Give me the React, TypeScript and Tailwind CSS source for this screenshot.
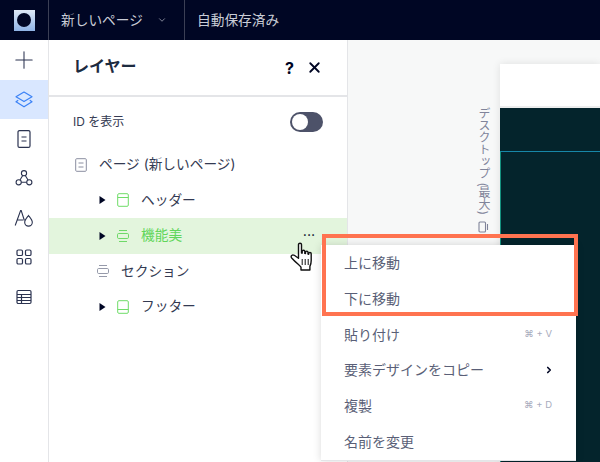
import { ChevronDown, Plus, X, ChevronRight } from "lucide-react"

const FONT = "font-['Inter','Noto_Sans_CJK_JP',sans-serif]"

function LayersIcon() {
  return (
    <svg width="18" height="17" viewBox="0 0 18 17" fill="none" stroke="#3b82f6" strokeWidth="1.200" strokeLinejoin="round">
      <path d="M9 1L17 5.800L9 10.600L1 5.800z" />
      <path d="M3.200 9.200L1 10.800L9 15.800L17 10.800L14.800 9.200" />
    </svg>
  )
}

function PageIcon() {
  return (
    <svg width="18" height="20" viewBox="0 0 18 20" fill="none" stroke="#2b3350" strokeWidth="1.2">
      <rect x="3" y="1.6" width="12" height="16.8" rx="1.5" />
      <path d="M6.5 8h5M6.5 12h5" />
    </svg>
  )
}

function ConnectIcon() {
  return (
    <svg width="18" height="18" viewBox="0 0 18 18" fill="none" stroke="#2b3350" strokeWidth="1.1">
      <circle cx="9" cy="4.2" r="2.6" />
      <circle cx="3.7" cy="13.3" r="2.6" />
      <circle cx="14.3" cy="13.3" r="2.6" />
      <path d="M7.7 6.5l-2.7 4.5M10.3 6.5l2.7 4.5M6.3 13.3h5.4" />
    </svg>
  )
}

function FontDropIcon() {
  return (
    <svg width="20" height="18" viewBox="0 0 20 18" fill="none" stroke="#2b3350" strokeWidth="1.1">
      <path d="M1.2 16.5L6.6 1.5h.6l3.2 10M3.2 11h6" />
      <path d="M14.5 6.5c2 2.600 3.800 4.600 3.800 6.800a3.800 3.800 0 0 1-7.600 0c0-2.200 1.800-4.200 3.800-6.800z" />
    </svg>
  )
}

function GridIcon() {
  return (
    <svg width="16" height="16" viewBox="0 0 16 16" fill="none" stroke="#2b3350" strokeWidth="1.2">
      <rect x="1" y="1" width="5.500" height="5.500" rx="1.300" />
      <rect x="9.500" y="1" width="5.500" height="5.500" rx="1.300" />
      <rect x="1" y="9.500" width="5.500" height="5.500" rx="1.300" />
      <rect x="9.500" y="9.500" width="5.500" height="5.500" rx="1.300" />
    </svg>
  )
}

function TableIcon() {
  return (
    <svg width="16" height="16" viewBox="0 0 16 16" fill="none" stroke="#2b3350" strokeWidth="1.2">
      <rect x="1" y="1.500" width="14" height="13" rx="1.200" />
      <path d="M1 5.500h14M1 8.500h14M1 11.500h14M5.500 5.500v9" />
    </svg>
  )
}

function HeaderIcon({ color }: { color: string }) {
  return (
    <svg width="12" height="14" viewBox="0 0 12 14" fill="none" stroke={color} strokeWidth="1">
      <rect x="0.700" y="0.700" width="10.600" height="12.600" rx="1.200" />
      <path d="M0.700 4.500h10.600" />
    </svg>
  )
}

function FooterIcon({ color }: { color: string }) {
  return (
    <svg width="12" height="14" viewBox="0 0 12 14" fill="none" stroke={color} strokeWidth="1">
      <rect x="0.700" y="0.700" width="10.600" height="12.600" rx="1.200" />
      <path d="M0.700 9.500h10.600" />
    </svg>
  )
}

function SectionIcon({ color }: { color: string }) {
  return (
    <svg width="12" height="12" viewBox="0 0 12 12" fill="none" stroke={color} strokeWidth="0.900">
      <path d="M2 0.500h8M2 11.500h8" />
      <rect x="0.500" y="3.500" width="11" height="5" rx="1.200" />
    </svg>
  )
}

function Caret() {
  return (
    <svg width="7" height="8" viewBox="0 0 7 8" fill="#000624" className="shrink-0">
      <path d="M0.500 0L6.500 4L0.500 8z" />
    </svg>
  )
}

function HandCursor() {
  return (
    <svg width="25" height="31" viewBox="0 0 25 31" className="absolute left-[290px] top-[242px]">
      <path
        d="M8.500 2.500c0-1.700 3-1.700 3 0v8.500l.7.100v-1.800c0-1.500 2.600-1.500 2.600 0v2.100l.7.100v-1.300c0-1.500 2.500-1.500 2.500 0v1.900l.7.100v-.700c0-1.400 2.500-1.400 2.500.2v6.900c0 2.600-.5 4.300-1.300 5.800v3.600H11v-2.800c-1.500-2.200-4.500-3.800-9.300-9.200-1.500-2 .6-3.900 2.600-2.700l4.200 3z"
        fill="#ffffff"
        stroke="#111111"
        strokeWidth="1.400"
        strokeLinejoin="round"
      />
      <path d="M12.200 17v6M15.200 17v6M18.200 17v6" stroke="#111111" strokeWidth="1" />
    </svg>
  )
}

function LayerRow({
  label,
  icon,
  caret,
  active,
  indent,
}: {
  label: string
  icon: React.ReactNode
  caret?: boolean
  active?: boolean
  indent: string
}) {
  return (
    <div className={`h-[35.5px] flex items-center ${indent} ${active ? "bg-[#e3f5dd]" : ""}`}>
      {caret && <span className="w-[15px] flex"><Caret /></span>}
      <span className="w-[18px] flex justify-center shrink-0">{icon}</span>
      <span className={`ml-[9px] mt-[1px] text-[13.7px] leading-none ${active ? "text-[#61d65a]" : "text-[#343a52]"}`}>{label}</span>
    </div>
  )
}

function MenuItem({ label, hint, arrow }: { label: string; hint?: string; arrow?: boolean }) {
  return (
    <div className="h-[35.7px] flex items-center justify-between pl-[23px] pr-[24px] text-[14px] text-[#5a5f77]">
      <span>{label}</span>
      {hint && <span className="text-[9.5px] text-[#a8abbd]">{hint}</span>}
      {arrow && <ChevronRight size={10} strokeWidth={4} className="text-[#000624] mr-[-2px]" />}
    </div>
  )
}

export default function App() {
  return (
    <div className={`relative w-[600px] h-[462px] overflow-hidden bg-white ${FONT}`}>
      <header className="h-[40px] bg-[#000624] flex items-stretch text-[#c9ccd6] text-[13.7px]">
        <div className="w-[49px] border-r border-[#3b3f55] flex items-center justify-center">
          <div className="w-[21px] h-[21px] bg-linear-to-b from-[#dfe9f6] to-[#8fb3e6] flex items-center justify-center">
            <div className="w-[14px] h-[14px] rounded-full bg-[#000624]" />
          </div>
        </div>
        <div className="w-[136px] border-r border-[#3b3f55] flex items-center pl-[12px]">
          新しいページ
          <ChevronDown size={10} className="ml-[14px] text-[#9a9eaf]" />
        </div>
        <div className="flex items-center pl-[12px]">自動保存済み</div>
      </header>

      <div className="flex h-[422px]">
        <nav className="w-[49px] shrink-0 border-r border-[#e4e5e8] flex flex-col text-[#2b3350]">
          <div className="h-[40px] flex items-center justify-center">
            <Plus size={28} strokeWidth={0.900} />
          </div>
          <div className="h-[39px] bg-[#d9e7ff] flex items-center justify-center">
            <LayersIcon />
          </div>
          <div className="h-[39.500px] flex items-center justify-center"><PageIcon /></div>
          <div className="h-[39.500px] flex items-center justify-center"><ConnectIcon /></div>
          <div className="h-[39.500px] flex items-center justify-center"><FontDropIcon /></div>
          <div className="h-[39.500px] flex items-center justify-center"><GridIcon /></div>
          <div className="h-[39.500px] flex items-center justify-center"><TableIcon /></div>
        </nav>

        <aside className="w-[298px] shrink-0 flex flex-col">
          <div className="h-[57px] border-b-2 border-[#e4e5e8] flex items-center pl-[24px] pr-[24px] pb-[3px]">
            <h1 className="text-[16px] font-bold text-[#1d2b3f]">レイヤー</h1>
            <span className="ml-auto mt-[3px] text-[16px] font-bold text-[#000624]">?</span>
            <X size={17} strokeWidth={2.600} className="ml-[12px] mt-[3px] text-[#000624]" />
          </div>
          <div className="h-[50px] flex items-center pl-[24px] pr-[24px]">
            <span className="text-[12px] text-[#343a52]">ID を表示</span>
            <div className="ml-auto w-[33px] h-[20px] rounded-full bg-[#4d5269] flex items-center pl-[2px]">
              <div className="w-[16px] h-[16px] rounded-full bg-white" />
            </div>
          </div>
          <LayerRow label="ページ (新しいページ)" icon={<svg width="12" height="14" viewBox="0 0 12 14" fill="none" stroke="#8a8ea0" strokeWidth="1"><rect x="0.700" y="0.700" width="10.600" height="12.600" rx="1" /><path d="M3.500 5h5M3.500 9h5" /></svg>} indent="pl-[23px]" />
          <LayerRow label="ヘッダー" caret icon={<HeaderIcon color="#6fdc68" />} indent="pl-[50px]" />
          <LayerRow label="機能美" caret active icon={<SectionIcon color="#61d65a" />} indent="pl-[50px]" />
          <LayerRow label="セクション" icon={<SectionIcon color="#8a8ea0" />} indent="pl-[45px]" />
          <LayerRow label="フッター" caret icon={<FooterIcon color="#6fdc68" />} indent="pl-[50px]" />
        </aside>

        <main className="flex-1 bg-[#f7f8f8] border-l border-[#e4e5e8] flex pt-[24px] pl-[122px]">
          <div className="flex flex-col items-center pt-[43px] w-[26px] mr-[4px] text-[12px] text-[#80849a]">
            <span className="[writing-mode:vertical-rl] leading-none">デスクトップ (最大)</span>
            <svg width="11" height="12" viewBox="0 0 11 12" fill="none" stroke="#80849a" strokeWidth="1.100" className="mt-[6px]">
              <rect x="1" y="1" width="6.500" height="10" rx="1" />
              <path d="M9.500 3v6" />
            </svg>
          </div>
          <div className="flex-1 flex flex-col shadow-[0_0_8px_rgba(0,0,0,0.1)]">
            <div className="h-[42px] bg-white" />
            <div className="h-[2px] bg-[#eceded]" />
            <div className="h-[43px] bg-[#04242c] border-l border-[#04242c]" />
            <div className="flex-1 bg-[#04242c] border-t border-l border-t-[#1787a8] border-l-[#14907f]" />
          </div>
        </main>
      </div>

      <div className="absolute left-[303px] top-[227px] text-[11px] font-bold leading-none tracking-[0.5px] text-[#000624]">...</div>
      <HandCursor />

      <div className="absolute left-[321px] top-[245px] w-[255px] h-[216px] bg-white border-b border-[#e4e5e8] shadow-[0_0_8px_rgba(0,0,0,0.15)]">
        <MenuItem label="上に移動" />
        <MenuItem label="下に移動" />
        <MenuItem label="貼り付け" hint="⌘ + V" />
        <MenuItem label="要素デザインをコピー" arrow />
        <MenuItem label="複製" hint="⌘ + D" />
        <MenuItem label="名前を変更" />
      </div>
      <div className="absolute left-[322px] top-[234px] w-[256px] h-[82px] border-[4px] border-[#ff7350]" />
    </div>
  )
}
